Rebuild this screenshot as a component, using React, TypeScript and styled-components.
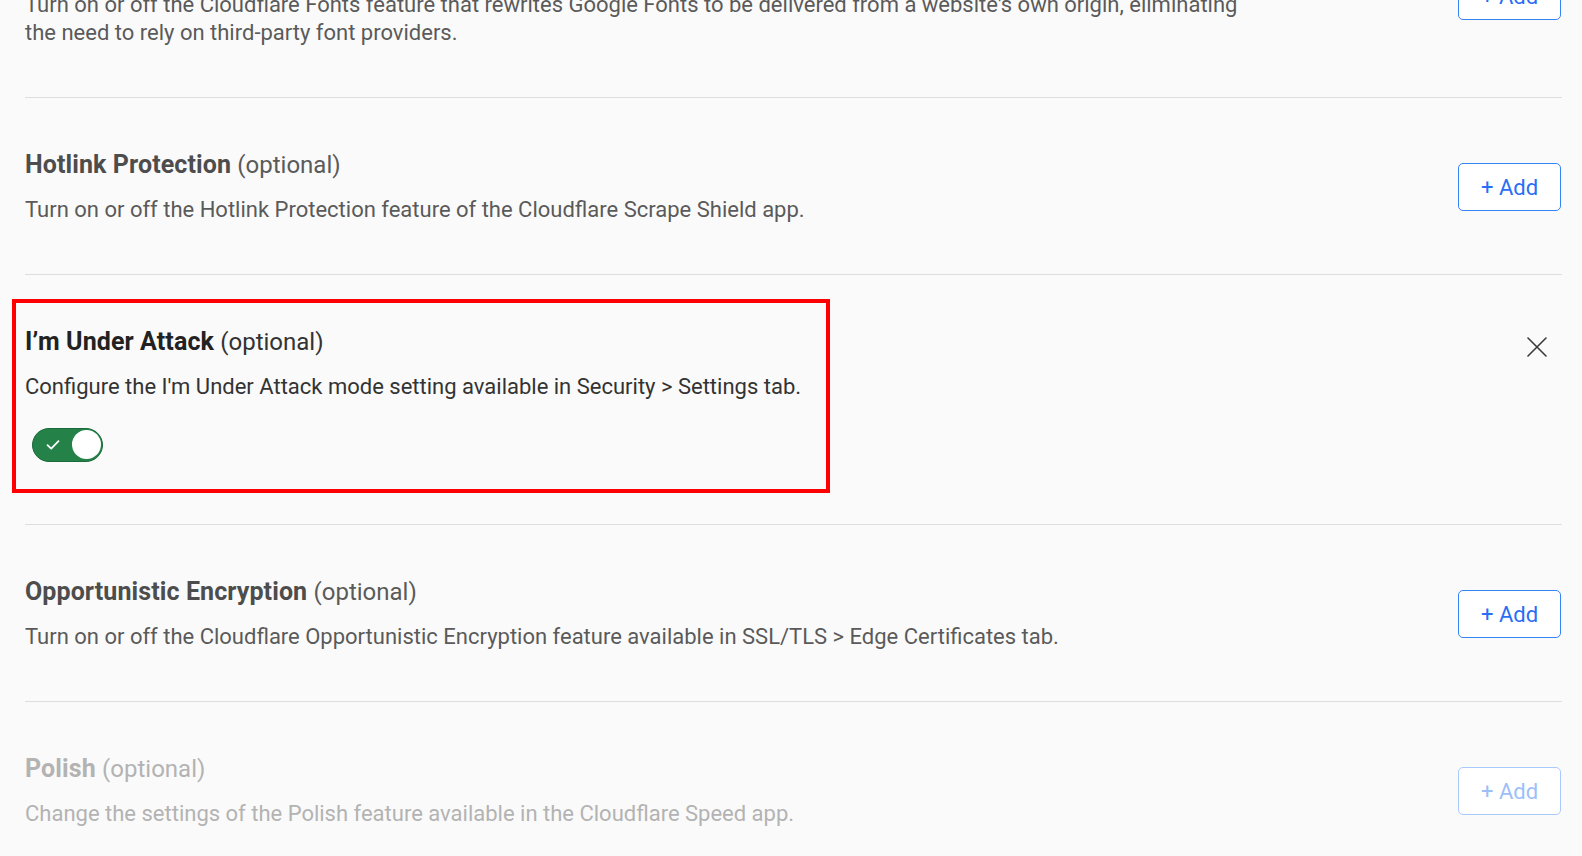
import styled, { createGlobalStyle, css } from 'styled-components';

const GlobalStyle = createGlobalStyle`
  html, body {
    margin: 0;
    padding: 0;
    overflow: hidden;
    background: #fafafa;
  }
  body {
    font-family: Roboto, "Liberation Sans", Arial, sans-serif;
    -webkit-font-smoothing: antialiased;
  }
`;

type Tone = 'normal' | 'active' | 'disabled';

const titleColor: Record<Tone, string> = {
  normal: '#4d4d4d',
  active: '#222222',
  disabled: '#b3b3b3',
};

const textColor: Record<Tone, string> = {
  normal: '#5a5a5a',
  active: '#333333',
  disabled: '#b3b3b3',
};

const List = styled.div`
  margin-top: -108px;
  padding: 0 20px 0 25px;
`;

const Row = styled.section`
  position: relative;
  display: flex;
  align-items: center;
  gap: 24px;
  border-top: 1px solid #dedede;
  padding: 52px 0 50px;

  &:first-child {
    border-top: 1px solid transparent;
  }
`;

const RowWithClose = styled(Row)`
  align-items: flex-start;
  padding-bottom: 51px;
`;

const Body = styled.div`
  flex: 1;
  min-width: 0;
  display: flex;
  flex-direction: column;
  gap: 16px;
`;

const Title = styled.h3<{ $tone: Tone }>`
  margin: 0;
  font-size: 25px;
  line-height: 30px;
  font-weight: 700;
  letter-spacing: 0.1px;
  color: ${({ $tone }) => titleColor[$tone]};
`;

const Optional = styled.span<{ $tone: Tone }>`
  font-size: 24px;
  font-weight: 400;
  letter-spacing: 0;
  color: ${({ $tone }) => textColor[$tone]};
`;

const Description = styled.p<{ $tone: Tone }>`
  margin: 0;
  max-width: 1225px;
  font-size: 22px;
  line-height: 28px;
  color: ${({ $tone }) => textColor[$tone]};
`;

const AddButton = styled.button<{ disabled?: boolean }>`
  flex: none;
  width: 103px;
  height: 48px;
  margin-right: 1px;
  border-radius: 5px;
  background: #ffffff;
  font-family: Roboto, "Liberation Sans", Arial, sans-serif;
  font-size: 22px;
  font-weight: 400;
  cursor: pointer;
  ${({ disabled }) =>
    disabled
      ? css`
          border: 1.5px solid #a9c9fb;
          color: #9dbff8;
          cursor: default;
        `
      : css`
          border: 1.5px solid #3584f6;
          color: #2a6ef4;
        `}
`;

const CloseButton = styled.button`
  flex: none;
  width: 40px;
  height: 40px;
  margin: 0 5px 0 0;
  display: flex;
  align-items: center;
  justify-content: center;
  padding: 0;
  border: none;
  background: transparent;
  color: #3a3a3a;
  cursor: pointer;
`;

const Toggle = styled.button<{ $on: boolean }>`
  position: relative;
  width: 71px;
  height: 34px;
  margin: 11px 0 11px 7px;
  padding: 0;
  border-radius: 17px;
  border: 1.5px solid ${({ $on }) => ($on ? '#1b6a3b' : '#8a8a8a')};
  background: ${({ $on }) => ($on ? '#248248' : '#c9c9c9')};
  cursor: pointer;
  box-sizing: border-box;

  svg {
    position: absolute;
    left: 13px;
    top: 10px;
  }
`;

const Knob = styled.span<{ $on: boolean }>`
  position: absolute;
  top: 1px;
  ${({ $on }) => ($on ? 'right: 1.5px;' : 'left: 1.5px;')}
  width: 29px;
  height: 29px;
  border-radius: 50%;
  background: #ffffff;
`;

const Highlight = styled.div`
  position: absolute;
  left: -13px;
  top: 24px;
  width: 818px;
  height: 194px;
  border: 4px solid #ff0000;
  box-sizing: border-box;
  pointer-events: none;
`;

type Feature = {
  name: string;
  text: string;
  tone: Tone;
};

const before: Feature[] = [
  {
    name: 'Fonts',
    text: "Turn on or off the Cloudflare Fonts feature that rewrites Google Fonts to be delivered from a website's own origin, eliminating the need to rely on third-party font providers.",
    tone: 'normal',
  },
  {
    name: 'Hotlink Protection',
    text: 'Turn on or off the Hotlink Protection feature of the Cloudflare Scrape Shield app.',
    tone: 'normal',
  },
];

const after: Feature[] = [
  {
    name: 'Opportunistic Encryption',
    text: 'Turn on or off the Cloudflare Opportunistic Encryption feature available in SSL/TLS > Edge Certificates tab.',
    tone: 'normal',
  },
  {
    name: 'Polish',
    text: 'Change the settings of the Polish feature available in the Cloudflare Speed app.',
    tone: 'disabled',
  },
];

function FeatureRow({ f }: { f: Feature }) {
  return (
    <Row>
      <Body>
        <Title $tone={f.tone}>
          {f.name} <Optional $tone={f.tone}>(optional)</Optional>
        </Title>
        <Description $tone={f.tone}>{f.text}</Description>
      </Body>
      <AddButton disabled={f.tone === 'disabled'}>+ Add</AddButton>
    </Row>
  );
}

export default function App() {
  return (
    <>
      <GlobalStyle />
      <List>
        {before.map((f) => (
          <FeatureRow key={f.name} f={f} />
        ))}

        <RowWithClose>
          <Body>
            <Title $tone="active">
              I’m Under Attack <Optional $tone="active">(optional)</Optional>
            </Title>
            <Description $tone="active">
              Configure the I'm Under Attack mode setting available in Security &gt; Settings tab.
            </Description>
            <div>
              <Toggle $on aria-label="I'm Under Attack">
                <svg width="14" height="12" viewBox="0 0 14 12" fill="none">
                  <path d="M1.5 6.2 5.2 9.6 12.5 2.2" stroke="#ffffff" strokeWidth="1.8" strokeLinecap="round" strokeLinejoin="round" />
                </svg>
                <Knob $on />
              </Toggle>
            </div>
          </Body>
          <CloseButton aria-label="Remove">
            <svg width="20" height="20" viewBox="0 0 20 20">
              <path d="M1 1 19 19M19 1 1 19" stroke="currentColor" strokeWidth="1.6" strokeLinecap="round" />
            </svg>
          </CloseButton>
          <Highlight />
        </RowWithClose>

        {after.map((f) => (
          <FeatureRow key={f.name} f={f} />
        ))}
      </List>
    </>
  );
}
